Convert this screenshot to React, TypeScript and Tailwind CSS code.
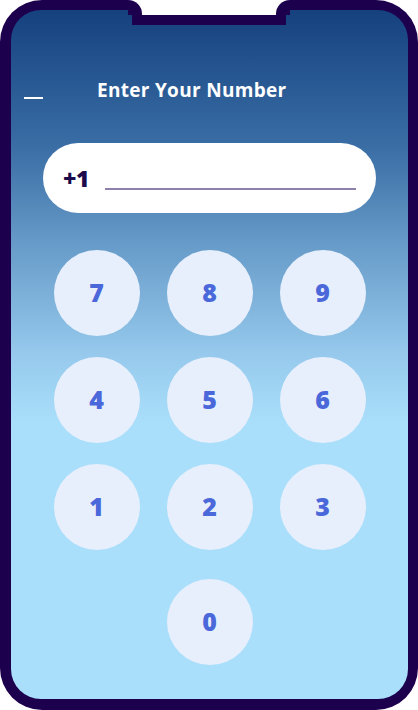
import React from 'react'

const rows = [
  ['7', '8', '9'],
  ['4', '5', '6'],
  ['1', '2', '3'],
]

function Key({ label }: { label: string }) {
  return (
    <button className="w-[86px] h-[86px] rounded-full bg-[#e7effc] flex items-center justify-center text-[25px] font-extrabold text-[#4a68da] font-['Open_Sans','Liberation_Sans',sans-serif]">
      {label}
    </button>
  )
}

export default function App() {
  return (
    <div className="relative w-[418px] h-[710px] bg-white">
      {/* phone frame */}
      <div className="h-full rounded-[42px] bg-[#1d004d] pl-[11px] pr-[10px] pt-[10px] pb-[11px]">
        <div className="h-full rounded-[30px] bg-[linear-gradient(180deg,#15417f_0%,#3a6ea5_20%,#6a9ecb_35%,#96c9ec_50%,#aadffb_60%,#aadffb_100%)] flex flex-col">
          {/* header */}
          <div className="mt-[70px] h-[20px] flex items-center font-['Open_Sans','Liberation_Sans',sans-serif]">
            <span className="ml-[13px] mt-[16px] w-[19px] h-[2px] bg-white" />
            <h1 className="ml-[54px] text-[19px] font-bold text-white tracking-[0.3px]">Enter Your Number</h1>
          </div>

          {/* phone input */}
          <div className="mt-[43px] mx-[32px] h-[70px] rounded-full bg-white flex items-center pl-[20px] pr-[20px] gap-[16px]">
            <span className="text-[23px] font-extrabold text-[#1d0a4a] font-['Open_Sans','Liberation_Sans',sans-serif] tracking-[-0.5px]">+1</span>
            <div className="flex-1 h-[1.5px] mt-[22px] bg-[#8d80aa]" />
          </div>

          {/* keypad */}
          <div className="mt-[37px] flex flex-col items-center">
            <div className="grid grid-cols-[86px_86px_86px] gap-x-[27px] gap-y-[21px]">
              {rows.flat().map(k => (
                <Key key={k} label={k} />
              ))}
            </div>
            <div className="mt-[29px]">
              <Key label="0" />
            </div>
          </div>
        </div>
      </div>

      {/* notch */}
      <div className="absolute top-0 left-[132px] w-[154px] h-[25px] bg-[#1d004d]" />
      <div className="absolute top-0 left-[142px] w-[134px] h-[15px] bg-white" />
      <div className="absolute top-0 left-[128px] w-[14px] h-[15px] bg-white">
        <div className="w-full h-full bg-[#1d004d] rounded-tr-[14px]" />
      </div>
      <div className="absolute top-0 left-[276px] w-[14px] h-[15px] bg-white">
        <div className="w-full h-full bg-[#1d004d] rounded-tl-[14px]" />
      </div>
    </div>
  )
}
